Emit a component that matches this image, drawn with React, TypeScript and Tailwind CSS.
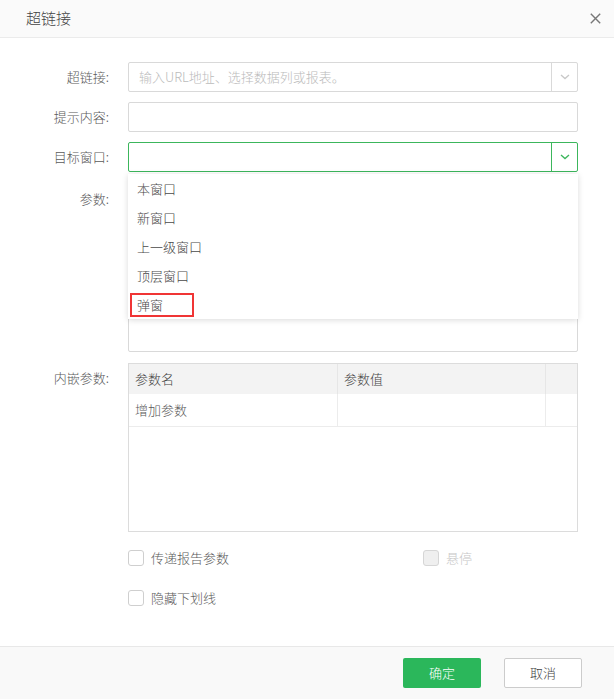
import React from "react";

const font = { fontFamily: '"Noto Sans CJK SC", "Noto Sans", sans-serif' };

function Chevron({ color }: { color: string }) {
  return (
    <svg width="10" height="6" viewBox="0 0 10 6" fill="none">
      <path d="M1 1 L5 4.6 L9 1" stroke={color} strokeWidth="1.3" />
    </svg>
  );
}

function Checkbox({ disabled }: { disabled?: boolean }) {
  return (
    <span
      className={
        disabled
          ? "w-[16px] h-[16px] rounded-[3px] border border-[#d6d6d6] bg-[#efefef] shrink-0"
          : "w-[16px] h-[16px] rounded-[3px] border border-[#cfcfcf] bg-white shrink-0"
      }
    />
  );
}

export default function App() {
  const items = ["本窗口", "新窗口", "上一级窗口", "顶层窗口", "弹窗"];
  return (
    <div className="w-[614px] h-[699px] bg-white flex flex-col relative text-[13px] text-[#5a5a5a] font-light" style={font}>
      {/* header */}
      <div className="h-[38px] bg-[#fafafa] border-b border-[#ebebeb] flex items-center justify-between pl-[26px] pr-[12px] shrink-0">
        <span className="text-[15px] text-[#444]">超链接</span>
        <svg width="11" height="11" viewBox="0 0 11 11" className="mr-[1px]">
          <path d="M0.8 0.8 L10.2 10.2 M10.2 0.8 L0.8 10.2" stroke="#777" strokeWidth="1.4" />
        </svg>
      </div>

      {/* body */}
      <div className="flex-1 pt-[24px] relative">
        <div className="flex flex-col gap-[10px]">
          <div className="flex items-center">
            <div className="w-[109px] text-right leading-[30px]">超链接:</div>
            <div className="ml-[19px] w-[450px] h-[30px] border border-[#d9d9d9] rounded-[2px] flex">
              <div className="flex-1 pl-[10px] flex items-center text-[#bbb]">输入URL地址、选择数据列或报表。</div>
              <div className="w-[26px] border-l border-[#d9d9d9] flex items-center justify-center">
                <Chevron color="#c8c8c8" />
              </div>
            </div>
          </div>
          <div className="flex items-center">
            <div className="w-[109px] text-right leading-[30px]">提示内容:</div>
            <div className="ml-[19px] w-[450px] h-[30px] border border-[#d9d9d9] rounded-[2px]" />
          </div>
          <div className="flex items-center relative">
            <div className="w-[109px] text-right leading-[30px]">目标窗口:</div>
            <div className="ml-[19px] w-[450px] h-[30px] border border-[#3cb65c] rounded-[2px] flex">
              <div className="flex-1" />
              <div className="w-[26px] border-l border-[#3cb65c] flex items-center justify-center">
                <Chevron color="#3cb65c" />
              </div>
            </div>
            {/* dropdown */}
            <div className="absolute left-[128px] top-[32px] w-[450px] bg-white shadow-[0_1px_6px_rgba(0,0,0,0.15)] z-10 text-[#4a4a4a]">
              {items.map((t, i) => (
                <div key={t} className="h-[29px] pl-[9px] flex items-center relative">
                  {t}
                  {i === 4 && (
                    <span className="absolute left-[2px] top-[3px] w-[64px] h-[24px] border-[2.5px] border-[#f03535]" />
                  )}
                </div>
              ))}
            </div>
          </div>
          <div className="flex items-start">
            <div className="w-[109px] text-right leading-[30px] pt-[2px]">参数:</div>
            <div className="ml-[19px] w-[450px] h-[170px] border border-[#d9d9d9] rounded-[2px]" />
          </div>
        </div>

        {/* table */}
        <div className="flex items-start mt-[11px]">
          <div className="w-[109px] text-right leading-[30px]">内嵌参数:</div>
          <div className="ml-[19px] w-[450px] h-[169px] border border-[#dcdcdc] flex flex-col">
            <div className="h-[30px] bg-[#f3f3f3] flex text-[#444] shrink-0">
              <div className="w-[209px] pl-[6px] flex items-center border-r border-[#e6e6e6]">参数名</div>
              <div className="w-[208px] pl-[6px] flex items-center border-r border-[#e6e6e6]">参数值</div>
              <div className="flex-1" />
            </div>
            <div className="h-[33px] flex border-b border-[#ececec] shrink-0">
              <div className="w-[209px] pl-[6px] flex items-center border-r border-[#ececec]">增加参数</div>
              <div className="w-[208px] border-r border-[#ececec]" />
              <div className="flex-1" />
            </div>
          </div>
        </div>

        {/* checkboxes */}
        <div className="ml-[128px] mt-[18px] flex flex-col gap-[24px]">
          <div className="flex items-center h-[16px]">
            <div className="w-[295px] flex items-center gap-[7px]">
              <Checkbox />
              <span>传递报告参数</span>
            </div>
            <div className="flex items-center gap-[7px]">
              <Checkbox disabled />
              <span className="text-[#c6c6c6]">悬停</span>
            </div>
          </div>
          <div className="flex items-center gap-[7px] h-[16px]">
            <Checkbox />
            <span>隐藏下划线</span>
          </div>
        </div>
      </div>

      {/* footer */}
      <div className="h-[53px] bg-[#f9f9f9] border-t border-[#e8e8e8] flex items-center justify-end pr-[32px] gap-[23px] shrink-0">
        <button className="w-[78px] h-[30px] rounded-[2px] bg-[#2bb75b] text-white text-[13px]">确定</button>
        <button className="w-[78px] h-[30px] rounded-[2px] bg-white border border-[#cccccc] text-[#444] text-[13px]">取消</button>
      </div>
    </div>
  );
}
